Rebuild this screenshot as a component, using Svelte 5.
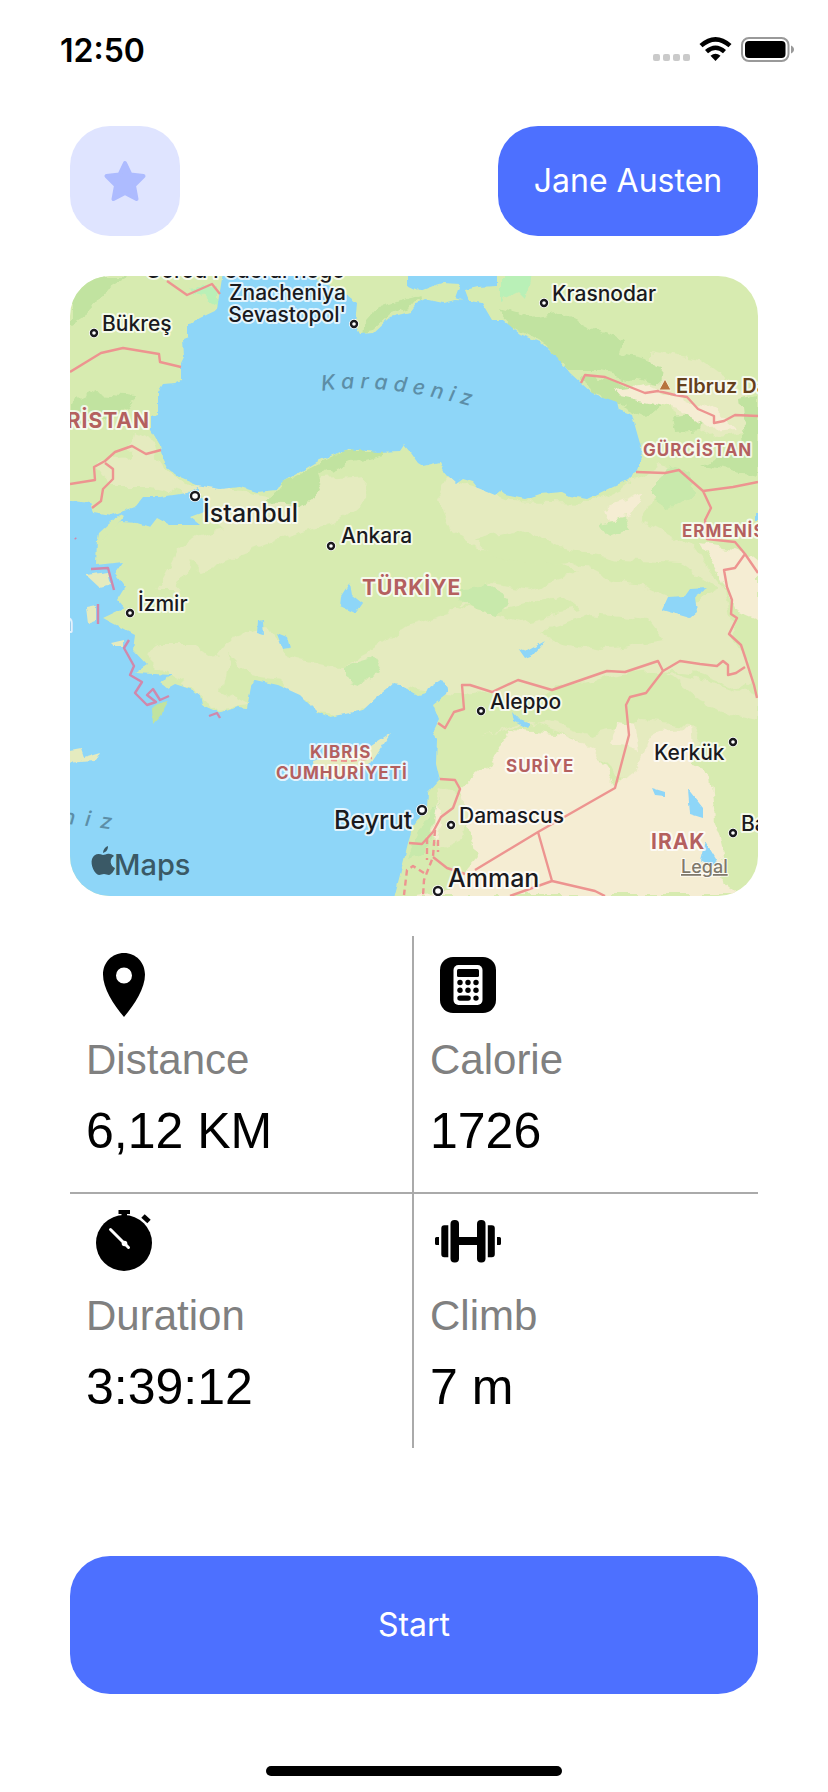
<script>
  const stats = [
    { id: 'distance', label: 'Distance', value: '6,12 KM' },
    { id: 'calorie', label: 'Calorie', value: '1726' },
    { id: 'duration', label: 'Duration', value: '3:39:12' },
    { id: 'climb', label: 'Climb', value: '7 m' }
  ];

  const places = [
    { name: 'Bükreş', x: 102, y: 331, cls: 'city' },
    { name: 'Ankara', x: 341, y: 543, cls: 'city' },
    { name: 'İzmir', x: 138, y: 611, cls: 'city' },
    { name: 'Krasnodar', x: 552, y: 301, cls: 'city' },
    { name: 'Aleppo', x: 490, y: 709, cls: 'city' },
    { name: 'Kerkük', x: 654, y: 760, cls: 'city' },
    { name: 'Damascus', x: 459, y: 823, cls: 'city' },
    { name: 'Bağdat', x: 741, y: 831, cls: 'city' },
    { name: "Gorod Federal'nogo", x: 345, y: 278, cls: 'city end' },
    { name: 'Znacheniya', x: 346, y: 300, cls: 'city end' },
    { name: "Sevastopol'", x: 346, y: 322, cls: 'city end' },
    { name: 'İstanbul', x: 203, y: 522, cls: 'capital' },
    { name: 'Beyrut', x: 334, y: 829, cls: 'capital' },
    { name: 'Amman', x: 448, y: 887, cls: 'capital' },
    { name: 'BULGARİSTAN', x: 150, y: 428, cls: 'country large end' },
    { name: 'TÜRKİYE', x: 362, y: 595, cls: 'country large' },
    { name: 'IRAK', x: 651, y: 849, cls: 'country large' },
    { name: 'GÜRCİSTAN', x: 643, y: 456, cls: 'country' },
    { name: 'ERMENİSTAN', x: 682, y: 537, cls: 'country' },
    { name: 'KIBRIS', x: 310, y: 758, cls: 'country' },
    { name: 'CUMHURİYETİ', x: 276, y: 779, cls: 'country' },
    { name: 'SURİYE', x: 506, y: 772, cls: 'country' },
    { name: 'Elbruz Dağı', x: 676, y: 393, cls: 'peak' }
  ];

  const smallDots = [[94, 333], [354, 324], [331, 546], [130, 613], [544, 303], [481, 711], [733, 742], [451, 825], [733, 833]];
  const bigDots = [[195, 496], [422, 810], [438, 891]];
</script>

<div class="screen">
  <div class="status">
    <span class="time">12:50</span>
    <svg class="signals" viewBox="0 0 144 28" role="img" aria-label="Wi-Fi on, battery full">
      <g fill="#cacaca">
        <rect x="1" y="18" width="7" height="7" rx="2" /><rect x="11" y="18" width="7" height="7" rx="2" />
        <rect x="21" y="18" width="7" height="7" rx="2" /><rect x="31" y="18" width="7" height="7" rx="2" />
      </g>
      <g>
        <path d="M47.500 8 Q63.500-6 79.500 8 L76.500 11.300 Q63.500 0 50.500 11.300Z" />
        <path d="M53 14 Q63.500 4.800 74 14 L71 17.200 Q63.500 10.800 56 17.200Z" />
        <path d="M58.500 19.800 Q63.500 15.600 68.500 19.800 L63.500 25Z" />
      </g>
      <rect x="90" y="2" width="46.500" height="23" rx="7" fill="none" stroke="#999" stroke-width="2" />
      <rect x="93" y="5" width="40.500" height="17" rx="4" />
      <path d="M139 9.500c4 1.500 4 6.500 0 8z" fill="#999" />
    </svg>
  </div>

  <main>
    <header>
      <button class="star" aria-label="Favourites">
        <svg viewBox="0 0 44 42" aria-hidden="true">
          <path d="M22 3 27.500 14.500 40.500 16 31 25.500 33.500 39 22 33 10.500 39 13 25.500 3.500 16 16.500 14.500Z" fill="#adbbff" stroke="#adbbff" stroke-width="4" stroke-linejoin="round" />
        </svg>
      </button>
      <button class="name">Jane Austen</button>
    </header>

    <svg class="map" viewBox="70 276 688 620" role="group" aria-label="Map of Türkiye">
      <defs>
        <path id="sea-curve" d="M322 391 Q385 381 484 410" />
        <path id="south-sea-curve" d="M-30 817 Q50 819 140 834" />
        <filter id="soft" x="-5%" y="-5%" width="110%" height="110%">
          <feTurbulence type="fractalNoise" baseFrequency="0.06" numOctaves="3" seed="4" />
          <feDisplacementMap in="SourceGraphic" scale="14" xChannelSelector="R" yChannelSelector="G" />
        </filter>
        <filter id="coast" x="-5%" y="-5%" width="110%" height="110%">
          <feTurbulence type="fractalNoise" baseFrequency="0.12" numOctaves="2" seed="7" />
          <feDisplacementMap in="SourceGraphic" scale="4" xChannelSelector="R" yChannelSelector="G" />
        </filter>
      </defs>
      <rect x="70" y="276" width="688" height="620" fill="#d7ebb0" />

      <g filter="url(#soft)">
        <g fill="#e5ebbf">
          <path d="M134 432 152 440 163 470 190 485 240 490 275 497 300 504 325 478 366 475 365 498 335 523 292 535 252 550 200 570 192 560 175 590 157 590 178 550 196 537 222 530 200 512 208 500 150 487 110 487 90 462 128 457Z" />
          <path d="M447 478 470 484 510 500 590 502 640 478 660 464 672 470 655 495 640 520 690 545 725 590 735 640 755 680 740 690 700 674 660 670 620 674 550 690 520 702 485 692 455 696 415 690 380 704 350 716 315 713 280 680 250 675 230 655 222 690 250 706 210 710 195 690 160 670 145 655 160 645 195 645 215 660 235 636 265 625 290 658 340 668 370 652 410 625 450 612 490 583 530 590 580 572 550 555 480 550 450 530 437 500Z" />
          <path d="M650 350 700 360 735 385 758 405 758 430 710 437 670 410 648 380 620 374 650 368Z" />
          <path d="M665 672 720 685 758 698 758 720 735 715 700 700Z M440 790 470 800 475 815 460 840 440 850 430 830Z" />
          <path d="M480 735 530 722 580 740 620 780 650 765 700 740 690 725 640 720 590 735 550 722Z" />
        </g>
        <g fill="#d7ebb0">
          <path d="M475 540 520 530 560 548 620 560 680 563 720 590 690 605 640 585 610 580 570 560 525 564 490 556Z" />
          <path d="M540 632 590 614 650 620 665 640 600 650 560 642Z M450 602 500 610 560 595 580 610 520 622Z" />
        </g>
        <g fill="#c1e3a0">
          <path d="M70 276 128 276 105 290 88 315 70 326Z M70 405 95 393 135 396 128 410 95 423 70 425Z" />
          <path d="M282 482 345 450 400 450 350 462 320 475 325 490 300 505 265 503Z" />
          <path d="M497 308 530 317 560 312 595 330 625 340 620 355 660 365 658 385 635 380 600 372 570 372 545 345 510 325Z" />
          <path d="M582 377 620 382 660 405 645 417 610 400 590 393Z M675 416 705 412 700 430 678 432Z M740 400 758 395 758 475 700 465 720 455 745 445Z" />
          <path d="M363 326 380 306 420 296 410 308 390 315 372 332 362 334Z" />
        </g>
        <g fill="#c8e9ab">
          <path d="M345 665 372 657 382 672 360 685 345 680Z M455 590 485 586 510 600 495 615 470 607Z" />
          <path d="M655 480 670 465 690 470 690 497 670 510 655 500Z M600 523 625 517 630 530 610 538Z M425 820 440 800 430 835 425 855 405 860Z" />
        </g>
        <g fill="#b9f0b7">
          <path d="M190 290 218 284 218 306Z M502 270 532 270 526 300 518 292 502 300Z" />
        </g>
        <g fill="#f5edd3">
          <path d="M615 390 650 385 690 402 715 410 735 428 710 430 680 410 650 402 620 396Z" />
          <path d="M605 508 645 492 632 515 610 520Z M700 543 740 550 758 565 758 620 735 610 722 580Z" />
          <path d="M512 730 565 735 590 745 615 785 640 765 655 730 690 728 695 765 710 775 715 820 725 860 720 880 740 896 395 896 450 890 475 860 470 820 460 790 485 770Z" />
          <path d="M615 722 635 724 640 750 610 742Z M438 800 440 825 432 840Z" />
        </g>
      </g>

      <g fill="#8ed6f8" filter="url(#coast)">
        <path d="M223 272 217 310 200 318 188 325 188 337 183 339 184 357 181 363 181 380 175 383 163 384 158 392 158 415 151 417 151 430 160 445 162 458 167 468 180 478 197 485 220 489 240 487 257 492 277 490 282 482 300 472 320 460 348 449 377 452 400 451 404 445 410 452 418 463 423 466 440 462 446 475 456 484 463 479 473 482 478 488 495 495 500 491 505 495 525 499 540 494 562 492 570 496 587 499 610 488 627 480 637 470 642 457 641 447 637 433 632 415 619 410 617 402 592 393 581 383 570 373 557 357 540 342 520 334 503 320 492 320 482 303 470 301 455 300 443 303 425 299 417 303 410 312 390 317 373 333 360 334 355 325 357 303 347 295 330 286 303 272Z" />
        <path d="M407 272 407 285 420 291 433 286 443 283 460 284 455 298 470 303 465 290 478 287 497 286 497 272Z" />
        <path d="M64 500 90 503 93 512 112 515 135 507 143 497 160 497 187 493 199 487 199 497 208 500 206 511 190 517 200 525 170 525 157 518 150 527 137 523 120 522 97 540 96 565 123 562 115 573 125 587 117 600 124 608 103 618 120 627 135 635 133 650 147 665 135 673 172 675 160 682 168 688 175 684 193 690 200 695 202 705 220 713 238 707 247 708 251 687 255 680 278 685 300 695 317 712 330 717 350 713 363 710 377 697 393 684 400 685 418 695 427 693 430 687 442 679 448 688 446 695 433 705 439 720 433 732 437 740 436 763 440 780 428 793 427 807 413 827 408 843 403 863 393 902 64 902Z" />
        <path d="M341 597 350 583 352 595 362 603 355 613 340 606Z M258 621 263 620 264 635 257 633Z M277 633 287 637 290 648 283 649Z" />
        <path d="M662 610 668 597 685 596 690 589 707 588 695 596 697 612 690 618Z M518 648 527 651 545 641 533 655 525 658Z M512 711 520 720 530 724 527 728 514 721Z" />
        <path d="M652 788 665 792 665 796 655 795Z M688 789 703 808 703 818 690 814Z M705 841 716 859 713 866 700 860Z M755 513 760 513 760 520 755 520Z" />
      </g>
      <g fill="#d7ebb0" filter="url(#coast)">
        <path d="M97 545 113 530 124 516 120 514 99 533Z" />
        <path d="M86 575 108 572 111 585 100 588Z M86 607 96 605 96 621 88 624Z M111 643 124 640 124 646 114 646Z" fill="#e5ebbf" />
        <path d="M152 708 169 700 160 716 153 724Z" fill="#c1e3a0" />
        <path d="M66 751 81 748 84 757 101 752 96 761 66 763Z" fill="#e5ebbf" />
        <path d="M312 762 335 755 365 750 391 733 372 762 350 775 330 779 313 771Z" fill="#e5ebbf" />
      </g>

      <g class="border">
        <path d="M70 372 101 353 123 348 159 354 160 362 181 367" />
        <path d="M167 281 187 295 203 288 212 284 220 294" />
        <path d="M70 484 95 480 94 467 105 461 115 452 132 446 146 454 161 450M105 463 113 469 113 479 103 489 101 501 92 508" />
        <path d="M581 383 585 375 605 377 645 393 658 391 675 395 687 397 698 409 714 416 714 423 724 421 735 415 758 416" />
        <path d="M636 472 665 473 679 470 703 491 711 508 705 520 707 539 735 542 745 554 758 573M703 491 733 487 758 482M745 554 735 568 724 570 727 587 732 600 731 614 737 618 729 634 741 645 746 660 754 685 757 698" />
        <path d="M438 723 445 728 454 712 464 709 462 685 470 685 492 692 518 680 552 690 607 671 625 672 658 661 663 671 646 693 630 697 626 705 629 735 615 788 538 832 475 870" />
        <path d="M663 671 680 661 700 664 717 666 723 661 728 665 728 675 736 673 745 667" />
        <path d="M440 779 455 780 460 789 453 808 441 817 433 832 422 844 409 843M538 832 552 881 510 896M552 881 595 891 605 896M433 857 447 868 465 874" />
        <path stroke-dasharray="6 4" d="M435 830 433 857 424 880 423 896M427 838 427 860M438 840 438 852M424 873 413 866 407 870 404 895M331 760 350 761 372 758" />
      </g>
      <g class="border sea">
        <path d="M91 569 108 568 114 590M98 604 98 624M129 640 124 648 134 666 130 675 142 682 135 693 147 705 156 702 147 695 153 689 160 700 169 696M209 716 217 713 220 718M75 538 76 539" />
      </g>
      <path d="m659 390 6-11 6 11z" fill="#b7743e" stroke="#f5edd3" stroke-width="1" />

      {#each smallDots as [x, y]}
        <circle cx={x} cy={y} r="5" fill="#fff" />
        <circle cx={x} cy={y} r="3" class="dot" />
      {/each}
      {#each bigDots as [x, y]}
        <circle cx={x} cy={y} r="6" fill="#fff" />
        <circle cx={x} cy={y} r="4" class="dot" />
      {/each}
      {#each places as place}
        <text x={place.x} y={place.y} class={place.cls}>{place.name}</text>
      {/each}
      <text class="sea-name"><textPath href="#sea-curve">Karadeniz</textPath></text>
      <text class="sea-name wide end"><textPath href="#south-sea-curve" startOffset="152">Akdeniz</textPath></text>
      <text class="city end faded" x="72" y="631">Atina</text>

      <g fill="#3a5966">
        <path d="M102 857c2 0 4-2 7-1 2 0 3 1 4 2-5 3-4 10 1 12-1 3-4 7-6 7-2 0-3-1-5-1s-3 1-5 1c-4 0-9-10-7-16 2-5 6-6 11-4zM102 855c0-3 2-6 5-7 0 4-2 6-5 7z" transform="translate(1 -2)" />
        <text class="brand" x="114" y="875">Maps</text>
      </g>
      <a href="#legal"><text class="legal" x="681" y="873">Legal</text></a>
    </svg>

    <dl class="stats">
      {#each stats as stat}
        <div class="stat">
          <svg viewBox="0 0 76 76" aria-hidden="true">
            {#if stat.id === 'distance'}
              <path fill-rule="evenodd" d="M38 6C26 6 17 15.500 17 27.500 17 41 27 57 38 70 49 57 59 41 59 27.500 59 15.500 50 6 38 6ZM38 20.500a8 8 0 1 1 0 16 8 8 0 0 1 0-16Z" />
            {:else if stat.id === 'calorie'}
              <rect x="10" y="10" width="56" height="56" rx="13" />
              <rect x="23.500" y="18" width="29" height="40" rx="5" fill="#fff" />
              <rect x="27" y="22" width="22" height="8" rx="1.500" />
              <circle cx="30" cy="35.500" r="2.700" /><circle cx="38" cy="35.500" r="2.700" /><circle cx="46" cy="35.500" r="2.700" />
              <circle cx="30" cy="43.300" r="2.700" /><circle cx="38" cy="43.300" r="2.700" /><circle cx="46" cy="43.300" r="2.700" />
              <rect x="27.300" y="48.400" width="13.500" height="5.400" rx="2.700" /><circle cx="46" cy="51.100" r="2.700" />
            {:else if stat.id === 'duration'}
              <circle cx="38" cy="40" r="28" />
              <path d="M32.500 7h11.500v4h-3v3h-5.500v-3h-3z" />
              <path d="m57 13 6 5.500" stroke="#000" stroke-width="5" />
              <path d="M24.500 26.500 42.500 44.500" stroke="#fff" stroke-width="3" stroke-linecap="round" />
              <circle cx="38.500" cy="40.500" r="2.800" fill="#fff" />
            {:else}
              <rect x="20.500" y="17" width="8.500" height="42.500" rx="4" /><rect x="47" y="17" width="8.500" height="42.500" rx="4" />
              <rect x="28" y="34" width="20" height="8" />
              <path d="M18.300 22.200h-4a3 3 0 0 0-3 3v26a3 3 0 0 0 3 3h4zM57.800 22.200h4a3 3 0 0 1 3 3v26a3 3 0 0 1-3 3h-4z" />
              <path d="M9 34H6.500a1.500 1.500 0 0 0-1.500 1.500v5A1.500 1.500 0 0 0 6.500 42H9zM67 34h2.500a1.500 1.500 0 0 1 1.500 1.500v5a1.500 1.500 0 0 1-1.500 1.500H67z" />
            {/if}
          </svg>
          <dt>{stat.label}</dt>
          <dd>{stat.value}</dd>
        </div>
      {/each}
    </dl>

    <button class="start">Start</button>
  </main>
  <div class="home"></div>
</div>

<style>
  :global(body) {
    background: #fff;
  }

  .screen {
    display: flex;
    flex-direction: column;
    min-height: 100vh;
    box-sizing: border-box;
    padding-bottom: 16px;
    font-family: Inter, "Noto Sans", sans-serif;
    color: #000;
  }

  .status {
    display: flex;
    justify-content: space-between;
    align-items: center;
    height: 100px;
    padding: 0 32px 0 60px;
  }

  .time {
    font-size: 32px;
    font-weight: 600;
  }

  .signals {
    width: 144px;
    height: 28px;
  }

  main {
    display: flex;
    flex-direction: column;
    padding: 26px 70px 0;
  }

  header {
    display: flex;
    justify-content: space-between;
    margin-bottom: 40px;
  }

  button {
    border: 0;
    border-radius: 40px;
    background: #4d70ff;
    color: #fff;
    font: 400 32px/40px Inter, "Noto Sans", sans-serif;
    cursor: pointer;
  }

  .star {
    display: grid;
    place-items: center;
    width: 110px;
    height: 110px;
    padding: 0;
    background: #dfe4ff;
  }

  .star svg {
    width: 44px;
    height: 42px;
  }

  .name {
    min-width: 260px;
    height: 110px;
    padding: 0 32px;
  }

  .map {
    display: block;
    width: 100%;
    border-radius: 40px;
    overflow: hidden;
  }

  .border {
    fill: none;
    stroke: #ed9490;
    stroke-width: 2.4;
    stroke-linejoin: round;
  }

  .border.sea {
    stroke: #d088ac;
  }

  .dot {
    fill: #fff;
    stroke: #1a1a1e;
    stroke-width: 2.4;
  }

  .map text {
    paint-order: stroke;
    stroke: rgba(255, 255, 255, 0.75);
    stroke-width: 4px;
    stroke-linejoin: round;
  }

  .map .end {
    text-anchor: end;
  }

  .map .city {
    font-size: 21px;
    font-weight: 500;
    fill: #1a1a1e;
  }

  .map .faded {
    fill: #8b9ba0;
  }

  .map .capital {
    font-size: 25px;
    font-weight: 500;
    fill: #1a1a1e;
  }

  .map .country {
    font-size: 17px;
    font-weight: 700;
    letter-spacing: 1px;
    fill: #b4605f;
  }

  .map .large {
    font-size: 21px;
  }

  .map .peak {
    font-size: 20px;
    font-weight: 600;
    fill: #65401c;
  }

  .map .sea-name {
    font-size: 21px;
    font-style: italic;
    font-weight: 500;
    letter-spacing: 6px;
    fill: #5c8ea7;
    stroke: none;
  }

  .map .wide {
    letter-spacing: 10px;
  }

  .map .brand {
    font-size: 29px;
    font-weight: 500;
    stroke: none;
  }

  .map .legal {
    font-size: 18px;
    font-weight: 500;
    fill: #80796b;
    stroke-width: 2px;
    text-decoration: underline;
  }

  .stats {
    display: grid;
    grid-template-columns: 1fr 1fr;
    margin: 40px 0 108px;
    font-family: "Liberation Sans", Arial, sans-serif;
  }

  .stat {
    display: flex;
    flex-direction: column;
    gap: 9px;
    box-sizing: border-box;
    min-height: 256px;
    padding: 11px 16px;
  }

  .stat:nth-child(odd) {
    border-right: 2px solid #aaa;
  }

  .stat:nth-child(n + 3) {
    border-top: 2px solid #aaa;
    padding-top: 9px;
  }

  .stat svg {
    width: 76px;
    height: 76px;
  }

  dt {
    font-size: 42px;
    line-height: 56px;
    color: #808080;
  }

  dd {
    margin: 0;
    font-size: 50px;
    line-height: 68px;
  }

  .start {
    height: 138px;
  }

  .home {
    width: 296px;
    height: 10px;
    margin: auto auto 0;
    border-radius: 5px;
    background: #000;
  }
</style>
